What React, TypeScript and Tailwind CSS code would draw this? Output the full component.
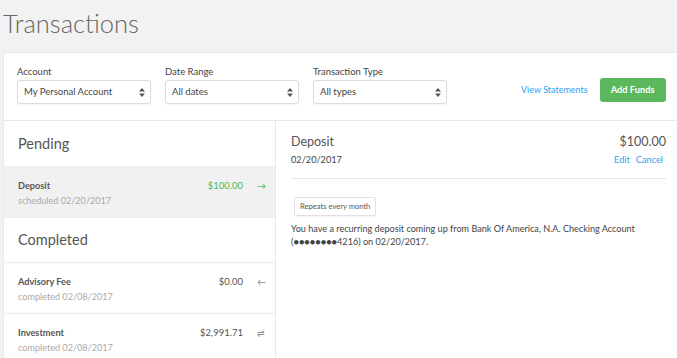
// Small up/down caret used in native-looking selects
function Caret() {
  return (
    <svg width="6" height="9" viewBox="0 0 6 9" className="text-[#555]" aria-hidden>
      <path d="M3 0 L6 3.5 H0 Z M3 9 L0 5.5 H6 Z" fill="currentColor" />
    </svg>
  );
}

function SelectBox({ label, value }: { label: string; value: string }) {
  return (
    <div className="flex w-[134px] flex-col">
      <span className="text-[9.5px] leading-[12px] text-[#444]">{label}</span>
      <div className="mt-[2px] flex h-[24px] items-center justify-between rounded-[3px] border border-[#dcdcdc] bg-white pl-[6px] pr-[5px] shadow-[0_1px_1px_rgba(0,0,0,0.04)]">
        <span className="text-[9.5px] text-[#444]">{value}</span>
        <Caret />
      </div>
    </div>
  );
}

function Row({
  title,
  sub,
  amount,
  icon,
  active,
  green,
}: {
  title: string;
  sub: string;
  amount: string;
  icon: string;
  active?: boolean;
  green?: boolean;
}) {
  return (
    <div
      className={`flex h-[51px] items-start justify-between border-b border-[#ececec] pl-[14px] pr-[8px] pt-[12px] ${
        active ? 'bg-[#f1f1f1]' : 'bg-white'
      }`}
    >
      <div className="flex flex-col">
        <span className="text-[9.2px] font-bold leading-[13px] text-[#555]">{title}</span>
        <span className="mt-[2px] text-[9.1px] leading-[13px] text-[#aaa]">{sub}</span>
      </div>
      <div className="flex items-center">
        <span className={`text-[9.5px] leading-[13px] ${green ? 'text-[#4cb85c]' : 'text-[#555]'}`}>{amount}</span>
        <span className={`ml-[14px] w-[10px] text-[9px] leading-[13px] ${green ? 'text-[#4cb85c]' : 'text-[#888]'}`}>{icon}</span>
      </div>
    </div>
  );
}

export default function App() {
  return (
    <div className="h-[358px] w-[677px] overflow-hidden bg-[#f2f2f2] pl-[3px] font-['Lato',sans-serif]">
      <div className="flex h-[52px] items-start pt-[7px]">
        <h1 className="text-[25.5px] font-light leading-[32px] text-[#666]">Transactions</h1>
      </div>

      <div className="w-[690px] rounded-[2px] border border-[#e8e8e8] bg-white">
        {/* filters */}
        <div className="flex h-[68px] items-start border-b border-[#e8e8e8] pl-[13px] pt-[13px]">
          <div className="flex gap-[14px]">
            <SelectBox label="Account" value="My Personal Account" />
            <SelectBox label="Date Range" value="All dates" />
            <SelectBox label="Transaction Type" value="All types" />
          </div>
          <div className="ml-[74px] mt-[12px] flex items-center">
            <span className="text-[9px] text-[#2ea3f2]">View Statements</span>
            <button className="ml-[12px] h-[24px] w-[66px] rounded-[3px] bg-[#5cb85c] text-[9.3px] font-bold text-white">
              Add Funds
            </button>
          </div>
        </div>

        <div className="flex h-[240px]">
          {/* list */}
          <div className="w-[272px] border-r border-[#e8e8e8]">
            <div className="flex h-[46px] items-center border-b border-[#f0f0f0] pl-[14px]">
              <span className="text-[14.5px] leading-[18px] text-[#555]">Pending</span>
            </div>
            <Row title="Deposit" sub="scheduled 02/20/2017" amount="$100.00" icon="→" active green />
            <div className="flex h-[45px] items-center border-b border-[#ececec] pl-[14px]">
              <span className="text-[14.5px] leading-[18px] text-[#555]">Completed</span>
            </div>
            <Row title="Advisory Fee" sub="completed 02/08/2017" amount="$0.00" icon="←" />
            <Row title="Investment" sub="completed 02/08/2017" amount="$2,991.71" icon="⇌" />
          </div>

          {/* detail */}
          <div className="w-[390px] pl-[15px] pt-[12px]">
            <div className="flex items-center justify-between">
              <span className="text-[12.5px] leading-[17px] text-[#555]">Deposit</span>
              <span className="text-[12.5px] leading-[17px] text-[#555]">$100.00</span>
            </div>
            <div className="mt-[3px] flex items-center justify-between">
              <span className="text-[9.2px] leading-[14px] text-[#444]">02/20/2017</span>
              <span className="mr-[3px] flex gap-[6px] text-[9.2px] leading-[14px] text-[#2ea3f2]">
                <span>Edit</span>
                <span>Cancel</span>
              </span>
            </div>
            <div className="mt-[11px] border-t border-[#e6e6e6]" />
            <div className="ml-[3px] mt-[18px] inline-flex h-[19px] items-center rounded-[2px] border border-[#e0e0e0] px-[5px] shadow-[0_1px_1px_rgba(0,0,0,0.04)]">
              <span className="text-[7.6px] text-[#555]">Repeats every month</span>
            </div>
            <p className="mt-[6px] text-[9.1px] leading-[13px] text-[#444]">
              You have a recurring deposit coming up from Bank Of America, N.A. Checking Account
              <br />
              (●●●●●●●●4216) on 02/20/2017.
            </p>
          </div>
        </div>
      </div>
    </div>
  );
}
